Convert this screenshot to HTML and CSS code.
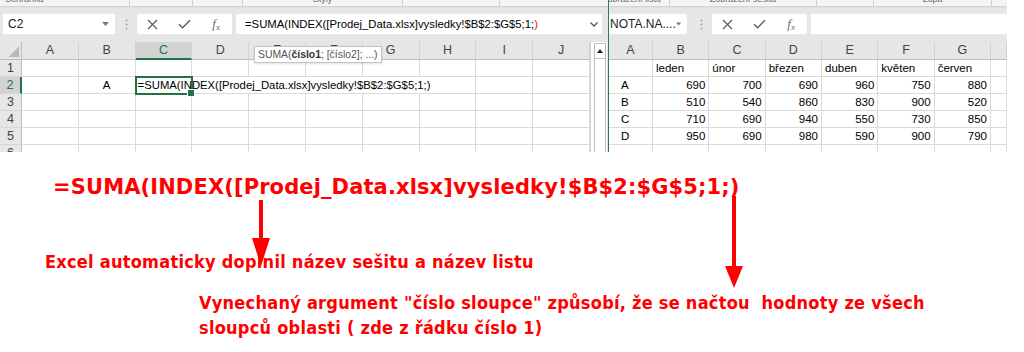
FILE: index.html
```html
<!DOCTYPE html>
<html lang="cs">
<head>
    <meta charset="UTF-8">
    <title>INDEX - vynechaný argument</title>
    <link rel="stylesheet" href="styles.css">
</head>
<body>
    <div class="shot">
        <!-- levé okno: sešit s vzorcem -->
        <div class="window left">
            <div class="ribbon">
                <div class="grp grp-clip"><span>Schránka</span></div>
                <div class="grp grp-font"></div>
                <div class="grp grp-align"></div>
                <div class="grp grp-styles"><span>Styly</span></div>
                <div class="grp grp-cells"></div>
                <div class="grp grp-edit"></div>
            </div>
            <div class="fbar">
                <div class="namebox">
                    <span class="ref">C2</span>
                    <svg class="drop" width="7" height="4" viewBox="0 0 7 4"><path d="M0 0h7L3.5 4z" fill="#7a7a7a"/></svg>
                </div>
                <svg class="grip" width="3" height="11" viewBox="0 0 3 11"><circle cx="1.5" cy="1.5" r="1" fill="#a6a6a6"/><circle cx="1.5" cy="5.5" r="1" fill="#a6a6a6"/><circle cx="1.5" cy="9.5" r="1" fill="#a6a6a6"/></svg>
                <div class="btns">
                    <span><svg width="11" height="11" viewBox="0 0 11 11"><path d="M1 1L10 10M10 1L1 10" stroke="#5f5f5f" stroke-width="1.3"/></svg></span>
                    <span><svg width="13" height="10" viewBox="0 0 13 10"><path d="M1 5.2L4.6 8.8L12 1.2" fill="none" stroke="#5f5f5f" stroke-width="1.5"/></svg></span>
                    <span class="fx"><i>f</i><i class="sub">x</i></span>
                </div>
                <div class="formula">
                    <span class="expr">=SUMA(INDEX([Prodej_Data.xlsx]vysledky!$B$2:$G$5;1;<span class="paren">)</span></span>
                    <svg class="expand" width="8" height="5" viewBox="0 0 8 5"><path d="M0.5 0.5L4 4L7.5 0.5" fill="none" stroke="#555" stroke-width="1.3"/></svg>
                </div>
            </div>
            <div class="sheet">
                <div class="grid grid-left">
                    <div class="corner"><span></span></div>
                    <div class="hd">A</div><div class="hd">B</div><div class="hd col-sel">C</div><div class="hd">D</div><div class="hd">E</div>
                    <div class="hd">F</div><div class="hd">G</div><div class="hd">H</div><div class="hd">I</div><div class="hd">J</div>

                    <div class="rh">1</div>
                    <div class="c"></div><div class="c"></div><div class="c"></div><div class="c"></div><div class="c"></div>
                    <div class="c"></div><div class="c"></div><div class="c"></div><div class="c"></div><div class="c"></div>

                    <div class="rh row-sel">2</div>
                    <div class="c"></div><div class="c mid">A</div>
                    <div class="c cur">=SUMA(INDEX([Prodej_Data.xlsx]vysledky!$B$2:$G$5;1;)</div>
                    <div class="c ov"></div><div class="c ov"></div><div class="c ov"></div><div class="c ov"></div>
                    <div class="c"></div><div class="c"></div><div class="c"></div>

                    <div class="rh">3</div>
                    <div class="c"></div><div class="c"></div><div class="c"></div><div class="c"></div><div class="c"></div>
                    <div class="c"></div><div class="c"></div><div class="c"></div><div class="c"></div><div class="c"></div>

                    <div class="rh">4</div>
                    <div class="c"></div><div class="c"></div><div class="c"></div><div class="c"></div><div class="c"></div>
                    <div class="c"></div><div class="c"></div><div class="c"></div><div class="c"></div><div class="c"></div>

                    <div class="rh">5</div>
                    <div class="c"></div><div class="c"></div><div class="c"></div><div class="c"></div><div class="c"></div>
                    <div class="c"></div><div class="c"></div><div class="c"></div><div class="c"></div><div class="c"></div>

                    <div class="rh">6</div>
                    <div class="c"></div><div class="c"></div><div class="c"></div><div class="c"></div><div class="c"></div>
                    <div class="c"></div><div class="c"></div><div class="c"></div><div class="c"></div><div class="c"></div>
                </div>
                <div class="vscroll">
                    <div class="track"><div class="up"><span class="tri"></span></div></div>
                </div>
            </div>
        </div>

        <div class="split"></div>

        <!-- pravé okno: zdrojová data -->
        <div class="window right">
            <div class="ribbon">
                <div class="grp grp-sheetview"><span>Zobrazení listu</span></div>
                <div class="grp grp-bookview"><span>Zobrazení sešitu</span></div>
                <div class="grp grp-show"></div>
                <div class="grp grp-zoom"><span>Lupa</span></div>
                <div class="grp grp-win"></div>
            </div>
            <div class="fbar">
                <div class="namebox namebox-cut">
                    <span class="ref">NOTA.NA....</span>
                    <svg class="drop" width="7" height="4" viewBox="0 0 7 4"><path d="M0 0h7L3.5 4z" fill="#7a7a7a"/></svg>
                </div>
                <svg class="grip" width="3" height="11" viewBox="0 0 3 11"><circle cx="1.5" cy="1.5" r="1" fill="#a6a6a6"/><circle cx="1.5" cy="5.5" r="1" fill="#a6a6a6"/><circle cx="1.5" cy="9.5" r="1" fill="#a6a6a6"/></svg>
                <div class="btns">
                    <span><svg width="11" height="11" viewBox="0 0 11 11"><path d="M1 1L10 10M10 1L1 10" stroke="#5f5f5f" stroke-width="1.3"/></svg></span>
                    <span><svg width="13" height="10" viewBox="0 0 13 10"><path d="M1 5.2L4.6 8.8L12 1.2" fill="none" stroke="#5f5f5f" stroke-width="1.5"/></svg></span>
                    <span class="fx"><i>f</i><i class="sub">x</i></span>
                </div>
                <div class="formula formula-open"></div>
            </div>
            <div class="sheet">
                <div class="grid grid-right">
                    <div class="hd">A</div><div class="hd">B</div><div class="hd">C</div><div class="hd">D</div>
                    <div class="hd">E</div><div class="hd">F</div><div class="hd">G</div><div class="hd"></div>

                    <div class="c"></div><div class="c">leden</div><div class="c">únor</div><div class="c">březen</div>
                    <div class="c">duben</div><div class="c">květen</div><div class="c">červen</div><div class="c"></div>

                    <div class="c lbl">A</div><div class="c num">690</div><div class="c num">700</div><div class="c num">690</div>
                    <div class="c num">960</div><div class="c num">750</div><div class="c num">880</div><div class="c"></div>

                    <div class="c lbl">B</div><div class="c num">510</div><div class="c num">540</div><div class="c num">860</div>
                    <div class="c num">830</div><div class="c num">900</div><div class="c num">520</div><div class="c"></div>

                    <div class="c lbl">C</div><div class="c num">710</div><div class="c num">690</div><div class="c num">940</div>
                    <div class="c num">550</div><div class="c num">730</div><div class="c num">850</div><div class="c"></div>

                    <div class="c lbl">D</div><div class="c num">950</div><div class="c num">690</div><div class="c num">980</div>
                    <div class="c num">590</div><div class="c num">900</div><div class="c num">790</div><div class="c"></div>

                    <div class="c"></div><div class="c"></div><div class="c"></div><div class="c"></div>
                    <div class="c"></div><div class="c"></div><div class="c"></div><div class="c"></div>
                </div>
            </div>
        </div>

        <div class="tip">SUMA(<b>číslo1</b>; [číslo2]; ...)</div>
    </div>

    <div class="notes">
        <p class="big">=SUMA(INDEX([Prodej_Data.xlsx]vysledky!$B$2:$G$5;1;)</p>
        <p class="note note-auto">Excel automaticky doplnil název sešitu a název listu</p>
        <p class="note note-arg">Vynechaný argument "číslo sloupce" způsobí, že se načtou&nbsp; hodnoty ze všech<br>sloupců oblasti ( zde z řádku číslo 1)</p>
        <svg class="arrow arrow-book" width="18" height="66" viewBox="0 0 18 66"><rect x="7" y="0" width="4" height="40" fill="#f00"/><path d="M0 38H18L9 66z" fill="#f00"/></svg>
        <svg class="arrow arrow-col" width="18" height="92" viewBox="0 0 18 92"><rect x="7" y="0" width="4" height="72" fill="#f00"/><path d="M0 70H18L9 92z" fill="#f00"/></svg>
    </div>
</body>
</html>
```

FILE: styles.css
```css
/* základ */
* {
    box-sizing: border-box;
}

body {
    margin: 0;
    background: #fff;
    font-family: "Liberation Sans", Arial, sans-serif;
    color: #000;
}

/* výřez z Excelu */
.shot {
    position: relative;
    display: flex;
    width: 1007px;
    height: 152px;
    overflow: hidden;
}

.window {
    display: flex;
    flex-direction: column;
    background: #e6e6e6;
    overflow: hidden;
}

.window.left {
    width: 608px;
    flex: none;
}

.window.right {
    flex: 1;
    min-width: 0;
}

.split {
    width: 1px;
    flex: none;
    background: #2f7a50;
}

/* spodek pásu karet */
.ribbon {
    display: flex;
    height: 6px;
    background: #f4f4f4;
    box-shadow: 0 1px 2px rgba(0, 0, 0, 0.1);
    position: relative;
    z-index: 1;
}

.grp {
    flex: none;
    height: 6px;
    border-right: 1px solid #d2d2d2;
    text-align: center;
    overflow: hidden;
    white-space: nowrap;
}

.grp span {
    display: block;
    margin-top: -6px;
    font-size: 9px;
    line-height: 11px;
    color: #6b6b6b;
}

.grp-clip { width: 210px; margin-left: -80px; }
.grp-font { width: 63px; }
.grp-align { width: 50px; }
.grp-styles { width: 160px; }
.grp-cells { width: 97px; }
.grp-edit { width: 108px; border-right: none; }

.grp-sheetview { width: 76px; margin-left: -15px; }
.grp-bookview { width: 147px; }
.grp-show { width: 57px; }
.grp-zoom { width: 118px; }
.grp-win { width: 40px; border-right: none; }

/* řádek vzorců */
.fbar {
    display: flex;
    align-items: center;
    height: 36px;
    padding-left: 3px;
    font-size: 12px;
}

.right .fbar {
    padding-left: 0;
}

.namebox {
    display: flex;
    align-items: center;
    justify-content: space-between;
    width: 112px;
    height: 20px;
    padding: 0 6px 0 5px;
    background: #fff;
    color: #222;
}

.namebox-cut {
    width: 78px;
    padding-left: 1px;
}

.grip {
    margin-left: 10px;
    flex: none;
}

.right .grip {
    margin-left: 13px;
}

.btns {
    display: flex;
    width: 95px;
    height: 20px;
    margin-left: 9px;
    background: #fff;
}

.btns span {
    flex: 1;
    display: flex;
    align-items: center;
    justify-content: center;
}

.fx {
    font-family: "Liberation Serif", serif;
    font-size: 13px;
    color: #6a6a6a;
}

.fx .sub {
    font-size: 9px;
    margin-top: 5px;
}

.formula {
    display: flex;
    align-items: center;
    justify-content: space-between;
    width: 366px;
    height: 20px;
    margin-left: 4px;
    padding: 0 4px 0 9px;
    background: #fff;
    font-size: 11.3px;
    white-space: nowrap;
}

.formula-open {
    flex: 1;
    width: auto;
}

.paren {
    color: #e0203a;
}

/* list */
.sheet {
    display: flex;
    height: 110px;
}

.grid {
    display: grid;
    background: #fff;
    grid-template-rows: 18px repeat(5, 17px) 8px;
    overflow: hidden;
}

.grid-left {
    width: 590px;
    grid-template-columns: 22px repeat(10, 56.8px);
}

.grid-right {
    width: 398px;
    grid-template-columns: 44px repeat(6, 56.33px) 16px;
}

.hd,
.rh,
.corner {
    background: #e6e6e6;
    color: #444;
    font-size: 12.5px;
    text-align: center;
}

.hd {
    line-height: 17px;
    border-right: 1px solid #d2d2d2;
    border-bottom: 1px solid #bdbdbd;
}

.rh {
    line-height: 16px;
    border-right: 1px solid #bdbdbd;
    border-bottom: 1px solid #d6d6d6;
    overflow: hidden;
}

.corner {
    position: relative;
    border-right: 1px solid #bdbdbd;
    border-bottom: 1px solid #bdbdbd;
}

.corner span {
    position: absolute;
    right: 2px;
    bottom: 2px;
    width: 10px;
    height: 10px;
    background: linear-gradient(135deg, transparent 50%, #b9b9b9 50%);
}

.col-sel {
    background: #d2d2d2;
    color: #217346;
    border-bottom: 2px solid #217346;
}

.row-sel {
    background: #d2d2d2;
    color: #217346;
    border-right: 2px solid #217346;
}

.c {
    border-right: 1px solid #dadada;
    border-bottom: 1px solid #dadada;
    padding: 0 3px;
    font-size: 11.5px;
    line-height: 16px;
    white-space: nowrap;
    overflow: hidden;
}

.c.mid {
    text-align: center;
}

.c.num {
    text-align: right;
}

.c.lbl {
    padding-left: 12px;
}

.c.ov {
    border-right: none;
}

.c.cur {
    position: relative;
    z-index: 1;
    overflow: visible;
    padding-left: 2px;
    font-size: 11.3px;
    outline: 2px solid #217346;
    outline-offset: -1px;
}

.c.cur::after {
    content: "";
    position: absolute;
    right: -4px;
    bottom: -4px;
    width: 6px;
    height: 6px;
    background: #217346;
    border: 1px solid #fff;
}

/* svislý posuvník */
.vscroll {
    width: 17px;
    padding: 1px 1px 0 3px;
    background: #fff;
    border-left: 1px solid #d0d0d0;
}

.track {
    height: 100%;
    border-left: 1px solid #bcbcbc;
    border-right: 1px solid #bcbcbc;
}

.up {
    display: flex;
    align-items: center;
    justify-content: center;
    height: 16px;
    border-bottom: 1px solid #bcbcbc;
    border-top: 1px solid #bcbcbc;
}

.tri {
    width: 0;
    height: 0;
    border-left: 3px solid transparent;
    border-right: 3px solid transparent;
    border-bottom: 4px solid #222;
}

/* nápověda funkce */
.tip {
    position: absolute;
    left: 254px;
    top: 46px;
    z-index: 3;
    height: 17px;
    padding: 0 3px;
    background: #fff;
    border: 1px solid #c3c3c3;
    box-shadow: 0 1px 2px rgba(0, 0, 0, 0.12);
    font-size: 10.4px;
    line-height: 15px;
    color: #555;
    white-space: nowrap;
}

.tip b {
    color: #333;
}

/* poznámky pod obrázkem */
.notes {
    position: relative;
    height: 200px;
    color: #f00;
    font-family: "DejaVu Sans", Verdana, sans-serif;
    font-weight: bold;
}

.big {
    margin: 0;
    padding: 25px 0 0 53px;
    font-size: 21px;
    line-height: 21px;
    letter-spacing: 0.12px;
}

.note {
    margin: 0;
    font-family: "DejaVu Sans Condensed", "DejaVu Sans", sans-serif;
    font-stretch: condensed;
    font-size: 18px;
    letter-spacing: 0.25px;
}

.note-auto {
    margin-top: 55px;
    padding-left: 45px;
    line-height: 18px;
}

.note-arg {
    margin-top: 19px;
    padding-left: 199px;
    line-height: 25px;
}

.arrow {
    position: absolute;
}

.arrow-book {
    left: 252px;
    top: 48px;
}

.arrow-col {
    left: 725px;
    top: 44px;
}
```
